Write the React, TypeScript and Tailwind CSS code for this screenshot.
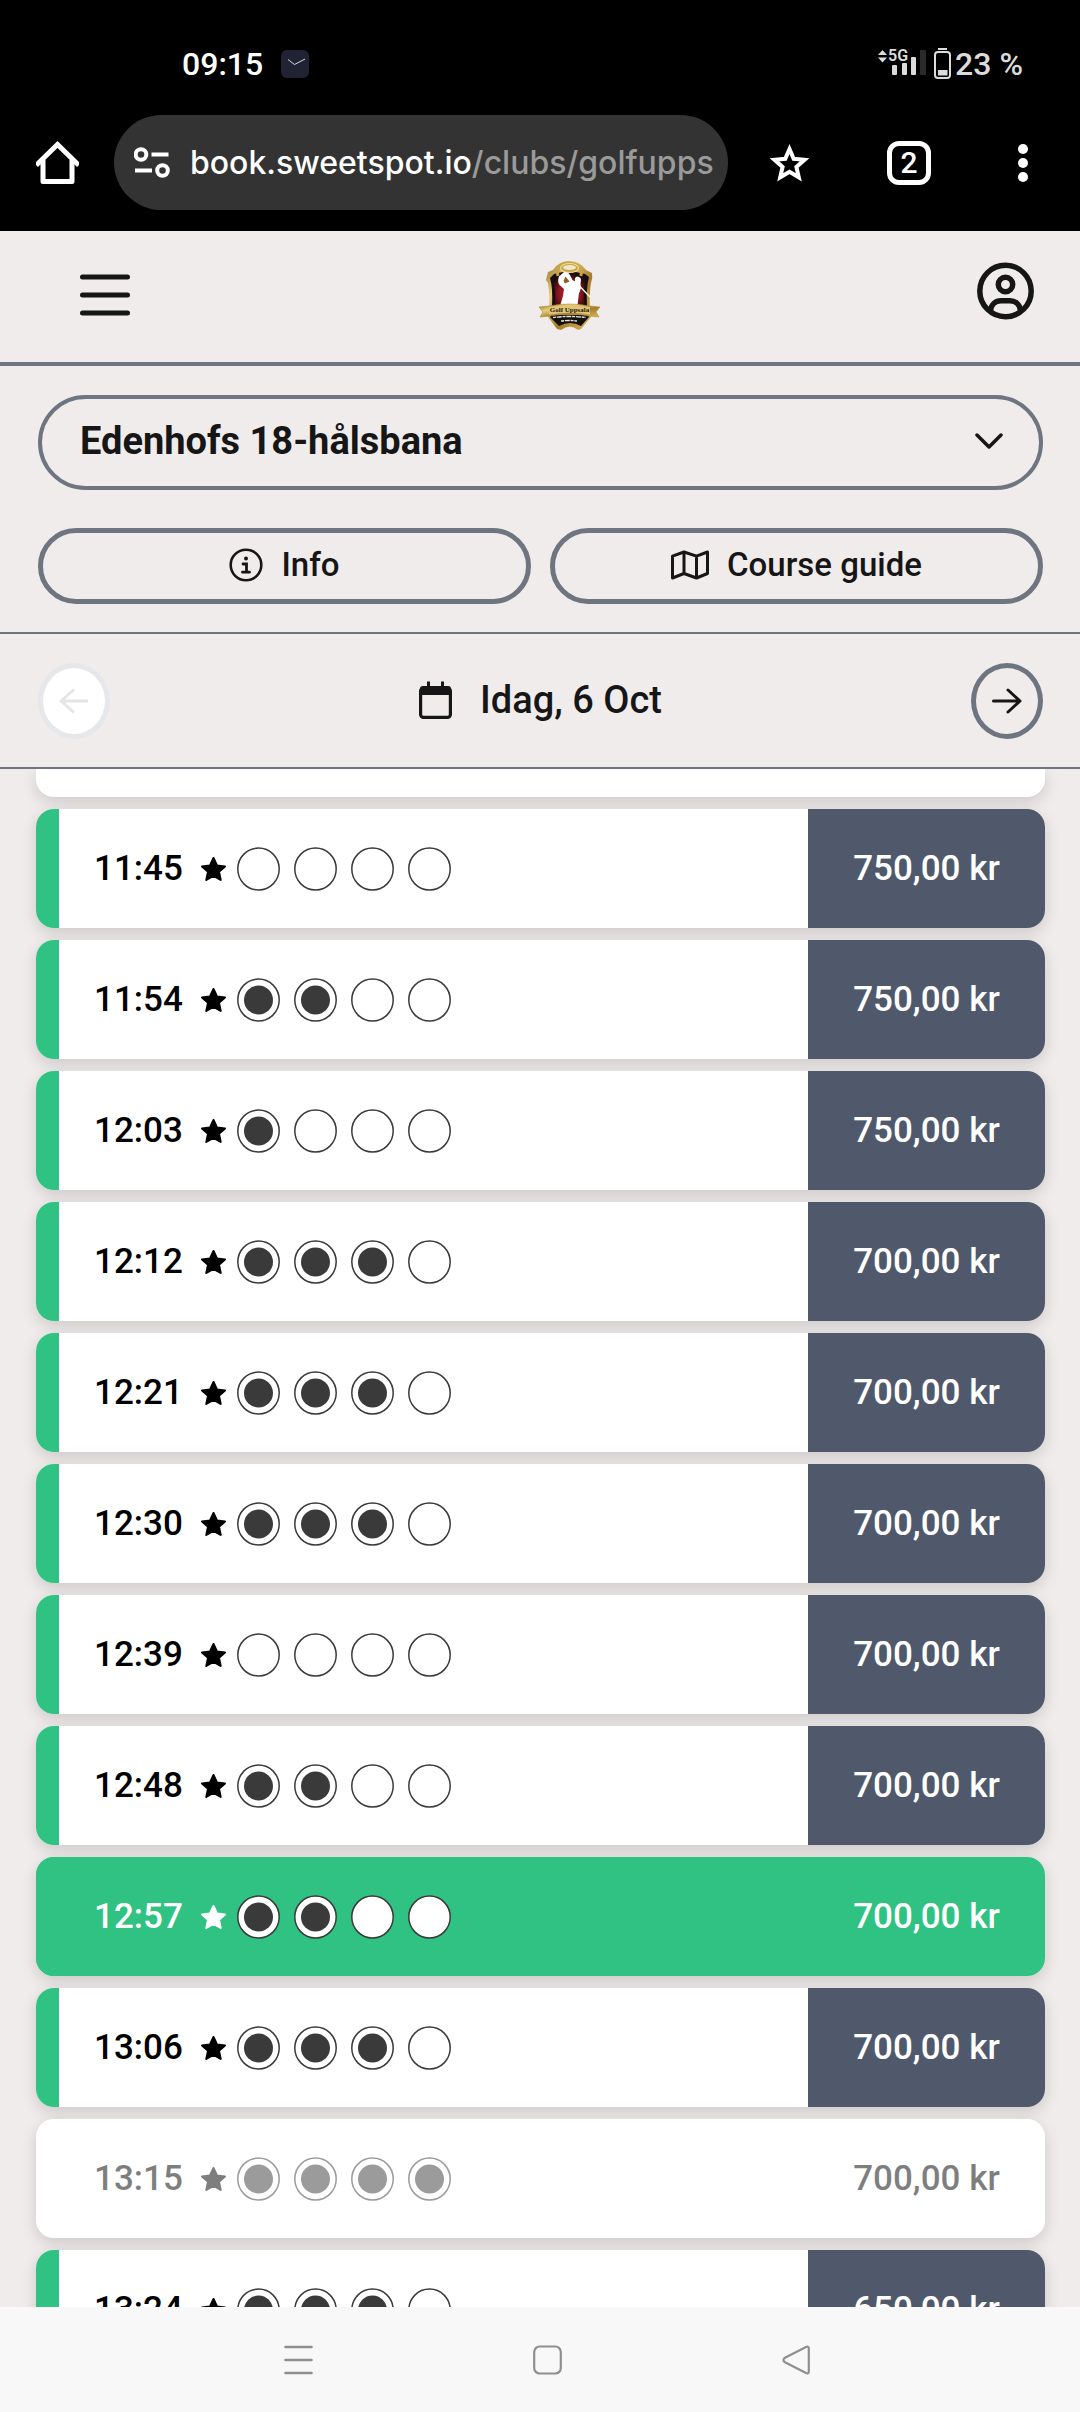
import { useState } from 'react';
import clsx from 'clsx';

interface TeeTime {
  time: string;
  players: number;
  price: string;
}

const COURSES = ['Edenhofs 18-hålsbana'];

const TEE_TIMES: TeeTime[] = [
  { time: '11:45', players: 0, price: '750,00 kr' },
  { time: '11:54', players: 2, price: '750,00 kr' },
  { time: '12:03', players: 1, price: '750,00 kr' },
  { time: '12:12', players: 3, price: '700,00 kr' },
  { time: '12:21', players: 3, price: '700,00 kr' },
  { time: '12:30', players: 3, price: '700,00 kr' },
  { time: '12:39', players: 0, price: '700,00 kr' },
  { time: '12:48', players: 2, price: '700,00 kr' },
  { time: '12:57', players: 2, price: '700,00 kr' },
  { time: '13:06', players: 3, price: '700,00 kr' },
  { time: '13:15', players: 4, price: '700,00 kr' },
  { time: '13:24', players: 3, price: '650,00 kr' },
];

const SLOTS = [0, 1, 2, 3];

function StatusBar() {
  return (
    <div className="flex h-[115px] items-center justify-between pt-3 pr-[57px] pl-[182px] text-[32px] leading-10 font-medium text-white">
      <div className="flex items-center gap-[18px]">
        <span>09:15</span>
        <svg className="h-7 w-7" viewBox="0 0 28 28" fill="none">
          <rect width="28" height="28" rx="6" fill="#1f2333" />
          <path d="M7 9.5 13.5 14.5 24 9" stroke="#d8dae0" strokeWidth="1" />
        </svg>
      </div>
      <div className="flex items-center gap-[3px] text-[#dcdcdc]">
        <svg className="h-8 w-[74px] overflow-visible" viewBox="0 0 74 32" fill="#dcdcdc">
          <path d="M0 7 4.500 2 9 7ZM0 9.500H9L4.500 14.500Z" />
          <text x="10" y="13" fontSize="16" fontWeight="600" fontFamily="Roboto, sans-serif">5G</text>
          <rect x="14" y="17" width="5" height="10" rx="1" />
          <rect x="24" y="15" width="5" height="12" rx="1" />
          <rect x="33" y="9" width="5" height="18" rx="1" />
          <rect x="42" y="2" width="6" height="25" rx="1" fill="#2a2a2a" />
          <path d="M60 0H69V2H60Z" />
          <rect x="57" y="4" width="15" height="26" rx="3" fill="none" stroke="#dcdcdc" strokeWidth="2" />
          <path d="M60 22H69.500V27.500H60Z" />
        </svg>
        <span>23 %</span>
      </div>
    </div>
  );
}

function BrowserBar() {
  return (
    <div className="flex h-[116px] items-start pr-[52px] pl-9">
      <button aria-label="Home" className="mr-[35px] flex h-[95px] items-center">
        <svg className="h-[43px] w-[43px]" viewBox="0 0 43 43" fill="none" stroke="#fff" strokeWidth="5" strokeLinejoin="round">
          <path d="M2 22.500 21.500 3.500 41 22.500" strokeLinecap="square" strokeLinejoin="miter" />
          <path d="M7 19V40.500H36V19" />
        </svg>
      </button>
      <button
        aria-label="Address bar"
        className="flex h-[95px] min-w-0 flex-1 items-center gap-5 rounded-full bg-[#333] pl-5 text-left"
      >
        <svg className="h-[31px] w-9 shrink-0" viewBox="0 0 36 31" fill="none" stroke="#fff" strokeWidth="4">
          <circle cx="7" cy="7.500" r="5.300" />
          <path d="M17.500 7.500H34.500M1 23.500H18" />
          <circle cx="28.500" cy="23.500" r="5.300" />
        </svg>
        <span className="font-[Inter,sans-serif] text-[32px] leading-10 font-medium whitespace-nowrap text-white">
          book.sweetspot.io<span className="text-[#9a9a9a]">/clubs/golfupps</span>
        </span>
      </button>
      <div className="flex h-[95px] items-center">
        <button aria-label="Bookmark" className="ml-[41px]">
          <svg className="h-10 w-[41px]" viewBox="0 0 41 40" fill="none" stroke="#fff" strokeWidth="4">
            <path d="M20.500 6 24.700 15.800 35.500 16.800 27.400 23.900 29.800 34.300 20.500 28.800 11.200 34.300 13.600 23.900 5.500 16.800 16.300 15.800Z" />
          </svg>
        </button>
        <button
          aria-label="Tabs"
          className="ml-[77px] flex h-11 w-11 items-center justify-center rounded-xl border-[5px] border-white text-[30px] leading-8 font-medium text-white"
        >
          2
        </button>
        <button aria-label="More" className="ml-[87px]">
          <svg className="h-10 w-[10px]" viewBox="0 0 10 40" fill="#fff">
            <circle cx="5" cy="6" r="5" />
            <circle cx="5" cy="20" r="5" />
            <circle cx="5" cy="34" r="5" />
          </svg>
        </button>
      </div>
    </div>
  );
}

function ClubLogo() {
  return (
    <svg className="h-[70px] w-[61px]" viewBox="0 0 61 70" role="img" aria-label="Golf Uppsala">
      <defs>
        <linearGradient id="gold" x1="0" y1="0" x2="1" y2="1">
          <stop offset="0" stopColor="#8f6a1e" />
          <stop offset="0.3" stopColor="#e8cf7c" />
          <stop offset="0.6" stopColor="#a67c2a" />
          <stop offset="1" stopColor="#d9b95c" />
        </linearGradient>
        <radialGradient id="red" cx="0.5" cy="0.6" r="0.6">
          <stop offset="0" stopColor="#c4232f" />
          <stop offset="0.6" stopColor="#8c1620" />
          <stop offset="1" stopColor="#2a0c0d" />
        </radialGradient>
      </defs>
      <path
        d="M14 10Q20 1 30.500 1 41 1 47 10L53 13Q54 18 52 23 50 35 51 50L52 57 42 69 39 70Q31 63 22 70L18 69 9 57 10 50Q11 35 9 23 7 20 7 20L9 12Z"
        fill="url(#gold)"
      />
      <path d="M15 14Q30 9 46 14L50 17Q47 28 48 46H13Q14 28 11 18Z" fill="#1c0d0d" />
      <path d="M18 17Q30 12 43 17L46 23Q44 34 45 46H16Q17 34 15 23Z" fill="url(#red)" />
      <path d="M19 16Q16 4 30 3 44 4 42 16" fill="none" stroke="#c9a54c" strokeWidth="3" />
      <ellipse cx="30.500" cy="8" rx="9" ry="4.500" fill="#c9a54c" stroke="#efdc94" strokeWidth="1.200" />
      <ellipse cx="30.500" cy="7.500" rx="6.500" ry="2.500" fill="#efe6cf" />
      {/* Golfer in the follow-through */}
      <path
        d="M25 12 29 12.500 31 15 33.500 20 36 21.500Q35 17 38.500 16.500 42 17 42 20L41.500 24 42 28 39.800 34 38.500 46H21L24 36 25 29 20.500 25Q18 22 20 16.500Z"
        fill="#fff"
      />
      <path d="M26.500 16.500 30.500 21.500 26 23.500 24.500 21Z" fill="#8a641f" />
      <path d="M40.500 26 51 37" stroke="#fff" strokeWidth="1.300" />
      <path d="M12 55H49L50 57 42 66Q31 60 20 66L11 57Z" fill="#14100e" />
      <path d="M0 47 10 46Q30 42 51 46L61 47 57 52 60 57 50 56Q30 52 11 56L1 57 4 52Z" fill="url(#gold)" stroke="#b08a3a" strokeWidth="0.600" />
      <path d="M10 47Q30 43.500 51 47V54.500Q30 51 10 54.500Z" fill="#dfc57a" />
      <text x="30.500" y="52" textAnchor="middle" fontSize="7" fontWeight="700" fontFamily="Liberation Serif, serif" fill="#241a08">
        Golf Uppsala
      </text>
      <path d="M14 57.500Q30 55.500 47 57.500M22 61Q30 60 38 61" stroke="#e8e4e0" strokeWidth="1.400" strokeDasharray="3 0.800 5 0.800" fill="none" />
    </svg>
  );
}

function Header() {
  return (
    <header className="flex h-[135px] items-center justify-between border-b-4 border-[#6e7580] pr-[46px] pb-1 pl-20">
      <button aria-label="Menu" className="pr-8">
        <svg className="h-[42px] w-[50px]" viewBox="0 0 50 42" stroke="#161616" strokeWidth="5" strokeLinecap="round">
          <path d="M2.500 3H47.500M2.500 21H47.500M2.500 39H47.500" />
        </svg>
      </button>
      <a href="#home">
        <ClubLogo />
      </a>
      <button aria-label="Profile" className="pb-2">
        <svg className="h-[58px] w-[57px]" viewBox="0 0 57 58" fill="none" stroke="#161616" strokeWidth="5.500">
          <circle cx="28.500" cy="29" r="25.700" />
          <circle cx="28.500" cy="22.500" r="7.200" />
          <path d="M13.500 49C14 42 19 38.800 24 38.800H33C38 38.800 43 42 43.500 49" />
        </svg>
      </button>
    </header>
  );
}

function CoursePicker() {
  return (
    <section className="flex flex-col gap-[38px] border-b-2 border-[#6e7580] pt-[29px] pr-[37px] pb-7 pl-[38px] text-[#161616]">
      <div className="relative">
        <select
          aria-label="Course"
          className="h-[95px] w-full appearance-none rounded-full border-4 border-[#6e7580] bg-transparent pr-20 pb-1 pl-[38px] text-[38px] leading-[44px] font-bold"
        >
          {COURSES.map((course) => (
            <option key={course}>{course}</option>
          ))}
        </select>
        <svg
          className="pointer-events-none absolute top-[37px] right-10 h-[18px] w-7"
          viewBox="0 0 28 18"
          fill="none"
          stroke="#161616"
          strokeWidth="3.500"
          strokeLinecap="round"
          strokeLinejoin="round"
        >
          <path d="M2 3 14 15 26 3" />
        </svg>
      </div>
      <div className="grid grid-cols-2 gap-[19px] text-[33px] leading-10 font-medium">
        <button className="flex h-[76px] items-center justify-center gap-[18px] rounded-full border-[5px] border-[#6e7580] pb-[2px]">
          <svg className="h-[34px] w-[34px]" viewBox="0 0 34 34" fill="none" stroke="#161616">
            <circle cx="17" cy="17" r="15.300" strokeWidth="2.600" />
            <circle cx="17" cy="10.500" r="2" fill="#161616" stroke="none" />
            <path d="M14 16H17.500V24M13.500 24.200H20.500" strokeWidth="2.800" strokeLinecap="round" />
          </svg>
          Info
        </button>
        <button className="flex h-[76px] items-center justify-center gap-[18px] rounded-full border-[5px] border-[#6e7580] pb-[2px]">
          <svg className="h-[30px] w-[38px]" viewBox="0 0 38 30" fill="none" stroke="#161616" strokeWidth="3" strokeLinejoin="round">
            <path d="M1.500 6.200 13 2 25.500 6.200 36.500 2V23.500L25.500 28 13 23.500 1.500 28ZM13 2V23.500M25.500 6.200V28" />
          </svg>
          Course guide
        </button>
      </div>
    </section>
  );
}

function DateBar() {
  return (
    <section className="flex h-[135px] items-center justify-between border-b-2 border-[#6e7580] pr-[37px] pl-[38px] text-[#161616]">
      <button
        aria-label="Previous day"
        disabled
        className="flex h-[76px] w-[72px] items-center justify-center rounded-[50%] border-[5px] border-[#e5e7eb] bg-white text-[#e5e5e5]"
      >
        <svg className="h-[26px] w-[30px]" viewBox="0 0 30 26" fill="none" stroke="currentColor" strokeWidth="3" strokeLinejoin="round">
          <path d="M29 13H2M15 1.500 2 13 15 24.500" />
        </svg>
      </button>
      <button className="flex items-center gap-7 pb-[2px] text-[38px] leading-[44px] font-medium">
        <svg className="h-[38px] w-[33px]" viewBox="0 0 33 38">
          <rect x="1.600" y="7" width="29.800" height="29.400" rx="3" fill="none" stroke="#161616" strokeWidth="3.200" />
          <path d="M1 14V8Q1 5 4 5H29Q32 5 32 8V14ZM8 0.500H11V7H8ZM22 0.500H25V7H22Z" fill="#161616" />
        </svg>
        Idag, 6 Oct
      </button>
      <button
        aria-label="Next day"
        className="flex h-[76px] w-[72px] items-center justify-center rounded-[50%] border-[5px] border-[#6e7580]"
      >
        <svg className="h-[26px] w-[30px]" viewBox="0 0 30 26" fill="none" stroke="currentColor" strokeWidth="3" strokeLinecap="round" strokeLinejoin="round">
          <path d="M1.500 13H28M16 2 28 13 16 24" />
        </svg>
      </button>
    </section>
  );
}

function PlayerSlot({ taken }: { taken: boolean }) {
  return (
    <svg className="h-11 w-[43px]" viewBox="0 0 43 44">
      <ellipse cx="21.500" cy="22" rx="20.700" ry="21" fill="#fff" stroke="#3a3a3a" strokeWidth="1.500" />
      {taken && <circle cx="21.500" cy="22" r="14.500" fill="#3a3a3a" />}
    </svg>
  );
}

interface TeeTimeRowProps {
  slot: TeeTime;
  selected: boolean;
  onSelect: () => void;
}

function TeeTimeRow({ slot, selected, onSelect }: TeeTimeRowProps) {
  const full = slot.players === 4;

  return (
    <li className="rounded-[18px] shadow-[0_5px_15px_rgba(0,0,0,0.15)]">
      <button
        disabled={full}
        onClick={onSelect}
        className={clsx(
          'flex h-[119px] w-full items-stretch overflow-hidden rounded-[18px] text-[35px] leading-[42px] font-medium',
          selected ? 'bg-[#30c282] text-white' : 'bg-white text-black'
        )}
      >
        <span className={clsx('w-[23px]', !full && 'bg-[#30c282]')} />
        <span className={clsx('flex flex-1 items-center pl-[35px]', full && 'opacity-50')}>
          <span className="w-[92px] text-left">{slot.time}</span>
          <svg className="mr-[10px] ml-[14px] h-[26px] w-[27px]" viewBox="0 0 27 26" fill="currentColor" stroke="currentColor" strokeWidth="2" strokeLinejoin="round">
            <path d="M13.500 2 17 9.500 25 10.500 19 15.800 20.700 24 13.500 20 6.300 24 8 15.800 2 10.500 10 9.500Z" />
          </svg>
          <span className="flex gap-[14px]">
            {SLOTS.map((i) => (
              <PlayerSlot key={i} taken={i < slot.players} />
            ))}
          </span>
        </span>
        <span
          className={clsx(
            'flex w-[237px] items-center justify-center',
            full && 'opacity-50',
            !full && !selected && 'bg-[#4f596b] text-white'
          )}
        >
          {slot.price}
        </span>
      </button>
    </li>
  );
}

function SystemNav() {
  return (
    <nav className="flex h-[105px] items-center justify-center gap-[220px] bg-[#f8f8f8] pl-[14px]">
      <button aria-label="Recent apps">
        <svg className="h-[30px] w-[29px]" viewBox="0 0 29 30" stroke="#8f8f8f" strokeWidth="2.600" strokeLinecap="round">
          <path d="M1.500 2H27.500M1.500 15H27.500M1.500 28H27.500" />
        </svg>
      </button>
      <button aria-label="Home screen">
        <svg className="h-[30px] w-[29px]" viewBox="0 0 29 30" fill="none" stroke="#8f8f8f" strokeWidth="2.200">
          <rect x="1.200" y="1.500" width="26.600" height="27" rx="5.500" />
        </svg>
      </button>
      <button aria-label="Back">
        <svg className="h-[30px] w-[29px]" viewBox="0 0 29 30" fill="none" stroke="#8f8f8f" strokeWidth="2.200" strokeLinejoin="round">
          <path d="M24.500 1.700 2.500 13Q0.500 15 2.500 17L24.500 28.300Q26.800 28.800 26.800 26.500V3.500Q26.800 1.200 24.500 1.700Z" />
        </svg>
      </button>
    </nav>
  );
}

export default function App() {
  const [selected, setSelected] = useState('12:57');

  return (
    <div className="flex h-screen flex-col bg-[#f0eceb] font-[Roboto,sans-serif]">
      <div className="bg-black">
        <StatusBar />
        <BrowserBar />
      </div>
      <Header />
      <CoursePicker />
      <DateBar />

      <main className="min-h-0 flex-1 overflow-hidden pr-[35px] pl-9">
        {/* Tail of the row that is scrolled under the date bar */}
        <div className="mb-3 h-7 rounded-b-[18px] bg-white shadow-[0_5px_15px_rgba(0,0,0,0.15)]" />
        <ul className="flex flex-col gap-3">
          {TEE_TIMES.map((slot) => (
            <TeeTimeRow
              key={slot.time}
              slot={slot}
              selected={slot.time === selected}
              onSelect={() => setSelected(slot.time)}
            />
          ))}
        </ul>
      </main>

      <SystemNav />
    </div>
  );
}
